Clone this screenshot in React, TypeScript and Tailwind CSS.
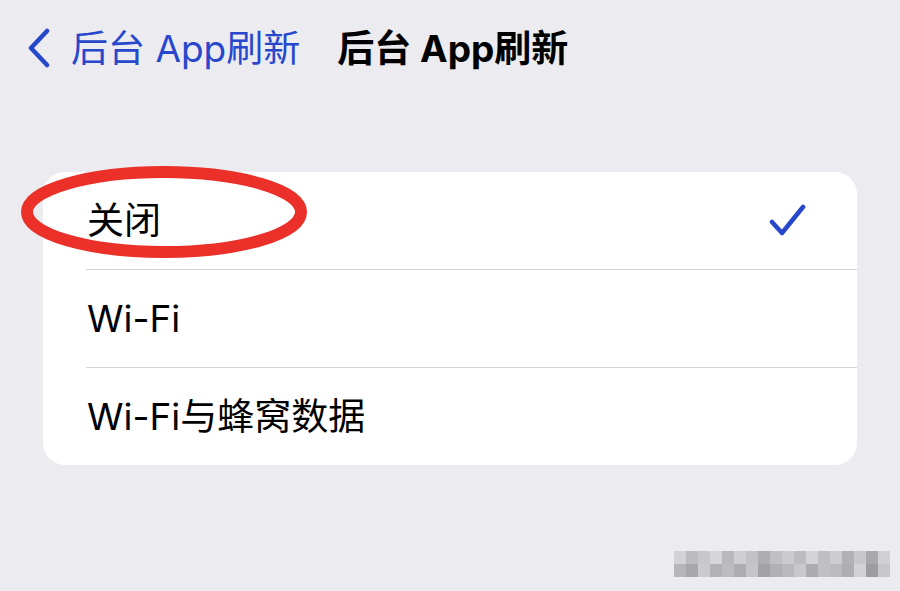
import React from "react";

const font = { fontFamily: '"Inter", "Noto Sans CJK SC", sans-serif' };

const wmTop = ["#d2d2d5", "#bcbcc0", "#c8c8cb", "#d6d6d9", "#b9b9bd", "#cfcfd2", "#c2c2c6", "#aeaeb2", "#c0c0c4", "#cbcbce", "#bdbdc1", "#d4d4d7", "#bfbfc3", "#cdcdd0", "#b2b2b6", "#c8c8cb", "#a9a9ad", "#d1d1d4"];
const wmBot = ["#b6b6ba", "#a8a8ac", "#cbcbce", "#b3b3b7", "#bdbdc1", "#adadb1", "#c5c5c8", "#a3a3a7", "#b1b1b5", "#b9b9bd", "#c9c9cc", "#acacb0", "#c1c1c5", "#bbbbbf", "#aeaeb2", "#d3d3d6", "#9d9da1", "#c7c7ca"];

export default function App() {
  return (
    <div className="relative w-[900px] h-[591px] overflow-hidden bg-[#ebebf0]" style={font}>
      {/* header */}
      <div className="flex items-center h-[96px] pl-[27px]">
        <svg width="24" height="40" viewBox="0 0 24 40" className="mr-[20px]">
          <path d="M20 3 L4 20 L20 37" fill="none" stroke="#2747cc" strokeWidth="4.5" strokeLinecap="round" strokeLinejoin="round" />
        </svg>
        <span className="text-[37px] leading-none text-[#2747cc]">后台 App刷新</span>
        <span className="ml-[37px] text-[37px] leading-none font-bold text-black">后台 App刷新</span>
      </div>

      {/* card */}
      <div className="mx-[43px] mt-[76px] bg-white rounded-[22px] overflow-hidden">
        <div className="flex items-center justify-between h-[97px] pl-[44px] pr-[50px]">
          <span className="text-[37px] text-black">关闭</span>
          <svg width="38" height="36" viewBox="0 0 38 36">
            <path d="M3 19 L13 30 L34 4" fill="none" stroke="#2747cc" strokeWidth="4.5" strokeLinecap="round" strokeLinejoin="round" />
          </svg>
        </div>
        <div className="ml-[43px] h-[1px] bg-[#d4d4d8]" />
        <div className="flex items-center h-[97px] pl-[44px]">
          <span className="text-[37px] text-black">Wi-Fi</span>
        </div>
        <div className="ml-[43px] h-[1px] bg-[#d4d4d8]" />
        <div className="flex items-center h-[97px] pl-[44px]">
          <span className="text-[37px] text-black">Wi-Fi与蜂窝数据</span>
        </div>
      </div>

      {/* red ellipse annotation */}
      <svg className="absolute left-[14px] top-[160px]" width="300" height="104" viewBox="0 0 300 104">
        <ellipse cx="150" cy="52" rx="137" ry="40" fill="none" stroke="#ea3028" strokeWidth="12" />
      </svg>

      {/* pixelated watermark */}
      <div className="absolute left-[674px] top-[551px] flex flex-col">
        <div className="flex">
          {wmTop.map((c, i) => (
            <div key={i} className="w-[12px] h-[13px]" style={{ backgroundColor: c }} />
          ))}
        </div>
        <div className="flex">
          {wmBot.map((c, i) => (
            <div key={i} className="w-[12px] h-[13px]" style={{ backgroundColor: c }} />
          ))}
        </div>
      </div>
    </div>
  );
}
